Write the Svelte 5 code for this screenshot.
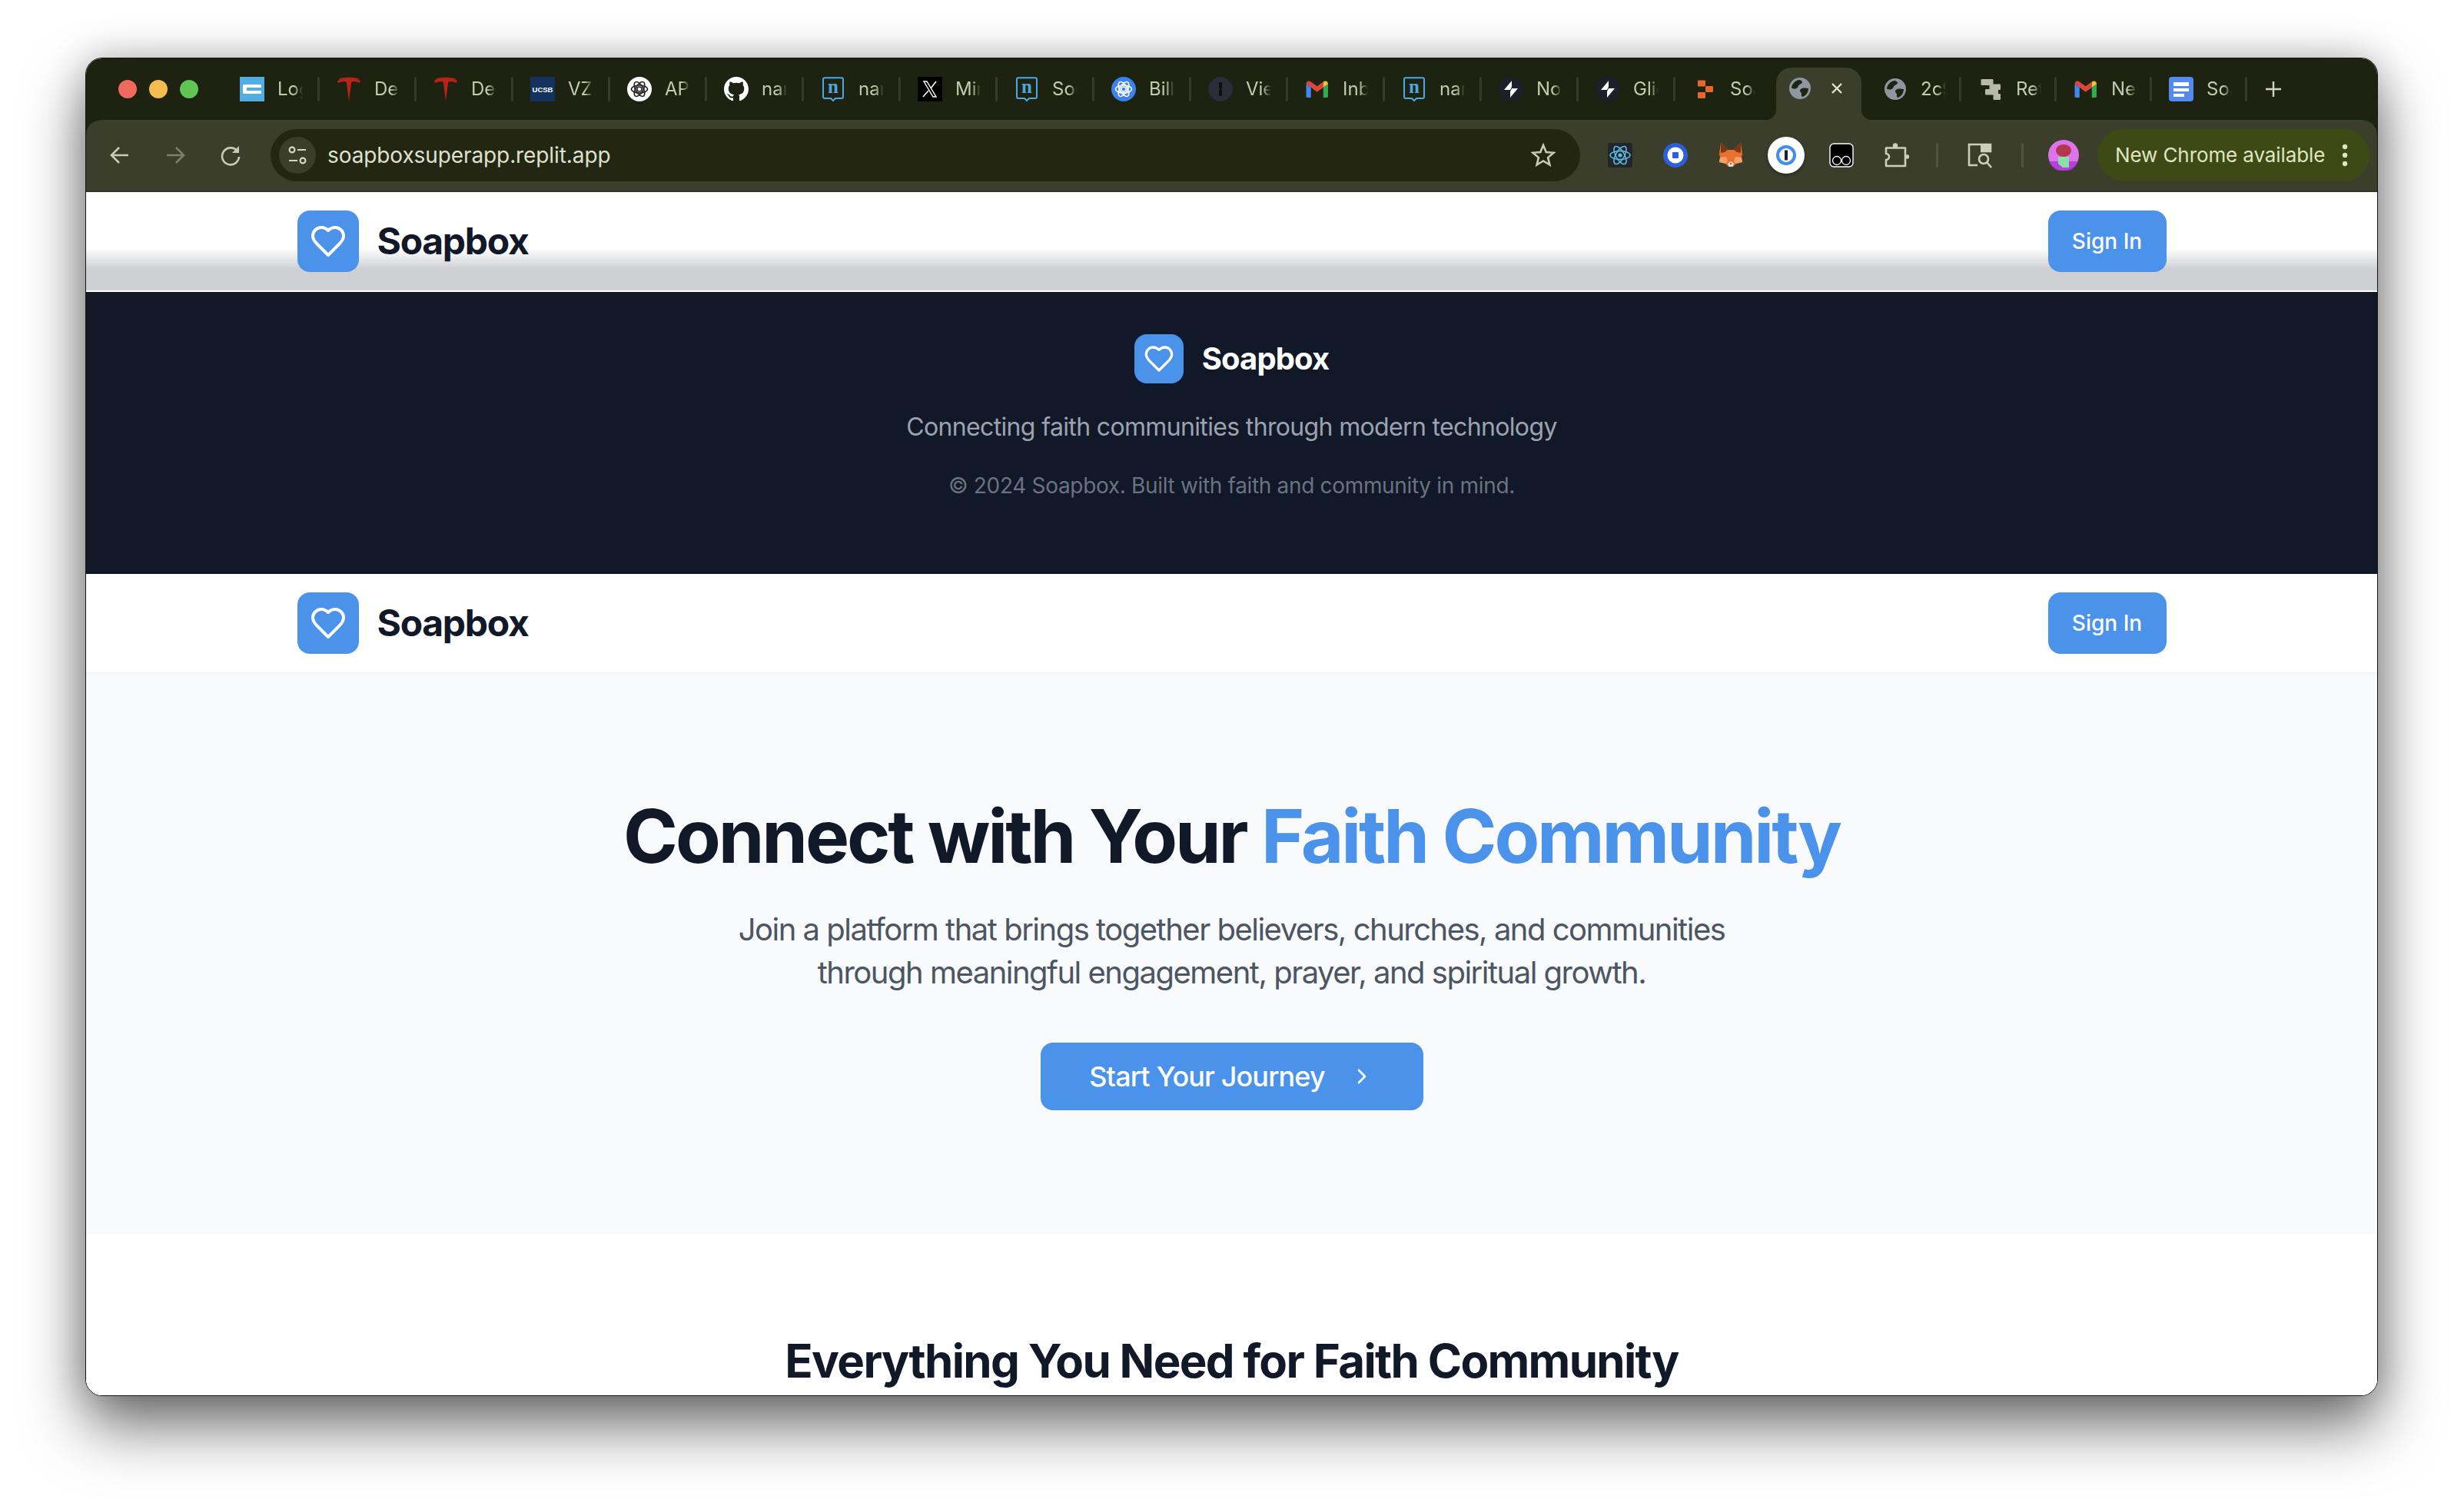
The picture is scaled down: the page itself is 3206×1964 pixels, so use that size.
<script>
  const tabs = [
    { icon: 'log', text: 'Log' }, { icon: 'tesla', text: 'Des' }, { icon: 'tesla', text: 'Des' },
    { icon: 'ucsb', text: 'VZ' }, { icon: 'openai', text: 'API' }, { icon: 'github', text: 'nar' },
    { icon: 'n', text: 'nar' }, { icon: 'x', text: 'Mir' }, { icon: 'n', text: 'Sou' },
    { icon: 'openaiBlue', text: 'Bill' }, { icon: 'key', text: 'Vie' }, { icon: 'gmail', text: 'Inb' },
    { icon: 'n', text: 'nar' }, { icon: 'bolt', text: 'No' }, { icon: 'bolt', text: 'Glic' },
    { icon: 'replit', text: 'Soa' }
  ];
  const laterTabs = [
    { icon: 'globe', text: '2c9' }, { icon: 'replitGrey', text: 'Ret' },
    { icon: 'gmail', text: 'Ne' }, { icon: 'docs', text: 'Soa' }
  ];
  const heart = 'M19 14c1.49-1.46 3-3.21 3-5.5A5.5 5.5 0 0 0 16.5 3c-1.76 0-3 .5-4.5 2-1.5-1.5-2.74-2-4.5-2A5.5 5.5 0 0 0 2 8.5c0 2.3 1.5 4.05 3 5.5l7 7Z';
</script>

{#snippet favicon(name)}
  <svg class="fav" viewBox="0 0 32 32">
    {#if name === 'log'}
      <rect width="32" height="32" fill="#53ade3" />
      <path d="M4 10h24v4H9v4h19v4H4z" fill="#fff" />
    {:else if name === 'tesla'}
      <path d="M1 5C9 1 23 1 31 5l-1 3c-2-1-5-2-8-2-2 0-3 1-3 2L16 32 13 8c0-1-1-2-3-2-3 0-6 1-8 2z" fill="#b8241b" />
      <path d="M3 2.5C11 0 21 0 29 2.5L28 4C21 2 11 2 4 4z" fill="#b8241b" />
    {:else if name === 'ucsb'}
      <rect width="32" height="32" fill="#13335e" />
      <text x="16" y="20" text-anchor="middle" class="ucsb">UCSB</text>
    {:else if name === 'openai' || name === 'openaiBlue'}
      <circle cx="16" cy="16" r="16" fill={name === 'openai' ? '#fff' : '#3a82ee'} />
      <g fill="none" stroke={name === 'openai' ? '#222' : '#fff'} stroke-width="1.6">
        <ellipse cx="16" cy="16" rx="10.5" ry="5" />
        <ellipse cx="16" cy="16" rx="10.5" ry="5" transform="rotate(60 16 16)" />
        <ellipse cx="16" cy="16" rx="10.5" ry="5" transform="rotate(120 16 16)" />
        <circle cx="16" cy="16" r="3" />
      </g>
    {:else if name === 'github'}
      <path transform="scale(2)" fill="#fff" fill-rule="evenodd" d="M8 0C3.58 0 0 3.58 0 8c0 3.54 2.29 6.53 5.47 7.59.4.07.55-.17.55-.38 0-.19-.01-.82-.01-1.49-2.01.37-2.53-.49-2.69-.94-.09-.23-.48-.94-.82-1.13-.28-.15-.68-.52-.01-.53.63-.01 1.08.58 1.23.82.72 1.21 1.87.87 2.33.66.07-.52.28-.87.51-1.07-1.78-.2-3.64-.89-3.64-3.95 0-.87.31-1.59.82-2.15-.08-.2-.36-1.02.08-2.12 0 0 .67-.21 2.2.82.64-.18 1.32-.27 2-.27.68 0 1.36.09 2 .27 1.53-1.04 2.2-.82 2.2-.82.44 1.1.16 1.92.08 2.12.51.56.82 1.27.82 2.15 0 3.07-1.87 3.75-3.65 3.95.29.25.54.73.54 1.48 0 1.07-.01 1.93-.01 2.2 0 .21.15.46.55.38A8.013 8.013 0 0016 8c0-4.42-3.58-8-8-8z" />
    {:else if name === 'n'}
      <path d="M5 1.2h22a2 2 0 0 1 2 2V26a2 2 0 0 1-2 2h-8l-3 3-3-3H5a2 2 0 0 1-2-2V3.200a2 2 0 0 1 2-2z" fill="none" stroke="#4aa9e2" stroke-width="2" />
      <text x="16" y="21" text-anchor="middle" class="nglyph">n</text>
    {:else if name === 'x'}
      <rect width="32" height="32" fill="#000" />
      <path d="M8 6h4l12 20h-4z" fill="none" stroke="#fff" stroke-width="1.4" />
      <path d="M24 6l-7 9M14 18l-7 8" stroke="#fff" stroke-width="1.6" />
    {:else if name === 'key'}
      <circle cx="16" cy="16" r="16" fill="#2b2e38" />
      <path d="M14 7h4v7l-1 2 1 2v7h-4v-7l1-2-1-2z" fill="#0d0f12" />
    {:else if name === 'gmail'}
      <g transform="translate(1.5 3.6) scale(.89 .73)">
        <path d="M0 8v22a2 2 0 0 0 2 2h5V14z" fill="#4285f4" />
        <path d="M32 8v22a2 2 0 0 1-2 2h-5V14z" fill="#34a853" />
        <path d="M0 8C0 3 4 1 7 4l9 8 9-8v10l-9 8-9-8-7-6z" fill="#d9483b" />
        <path d="M25 4c3-3 7-1 7 4l-7 6z" fill="#f6bd41" />
      </g>
    {:else if name === 'bolt'}
      <circle cx="16" cy="16" r="16" fill="#1d2029" />
      <path d="M17 5L7 17h8l2-4zM15 27l10-12h-8l-2 4z" fill="#fff" />
    {:else if name === 'replit'}
      <g fill="#e4682c">
        <rect x="7" y="4.500" width="10" height="8" rx="1" />
        <rect x="17" y="12" width="10" height="8" rx="1" />
        <rect x="7" y="20" width="10" height="8" rx="1" />
      </g>
    {:else if name === 'replitGrey'}
      <g fill="#b7b9aa">
        <rect x="3.500" y="3" width="16" height="8" rx="1" />
        <rect x="14.500" y="9.500" width="14.500" height="7.500" rx="1" />
        <rect x="9" y="16" width="17" height="7.500" rx="1" />
        <rect x="19.500" y="22" width="9.500" height="8" rx="1" />
      </g>
    {:else if name === 'docs'}
      <rect width="32" height="32" rx="4" fill="#5489ee" />
      <path d="M6 7h20v5H6zM6 15h20v4H6zM6 22h14v4H6z" fill="#fff" />
    {:else if name === 'globe'}
      <circle cx="16" cy="16" r="14" fill="#9096a0" />
      <path d="M5 15.500C5.500 10 10 5.500 15.500 5c2 .5 3.500 1.500 3.500 3 0 2-3 2-4.500 4S13 16 10 16.500c-2 .3-3.500-.3-5-1z" fill="#1f2413" />
      <path d="M27 16c0 5-3 9.500-7.500 11-1.500-.5-2-2-1.500-3.500.5-2-2-2.500-2-4.500s3-3.500 5.500-3.500c2 0 4 .5 5.500.5z" fill="#1f2413" />
    {/if}
  </svg>
{/snippet}

{#snippet logo(cls, size)}
  <span class="mark {cls}">
    <svg viewBox="0 0 24 24" width={size} height={size} fill="none" stroke="#fff" stroke-width="2" stroke-linecap="round" stroke-linejoin="round"><path d={heart} /></svg>
  </span>
{/snippet}

{#snippet topnav()}
  <div class="nav-inner">
    <div class="brand">
      {@render logo('mark-lg', 48)}
      <span class="brand-name">Soapbox</span>
    </div>
    <button class="signin">Sign In</button>
  </div>
{/snippet}

<div class="desktop">
  <main class="window">
    <header class="chrome">
      <div class="tabstrip">
        <div class="lights">
          <i class="red"></i><i class="yellow"></i><i class="green"></i>
        </div>
        {#each tabs as t}
          <div class="tab">
            {@render favicon(t.icon)}
            <span class="tab-text">{t.text}</span>
          </div>
        {/each}
        <div class="tab-active">
          {@render favicon('globe')}
          <svg class="close" viewBox="0 0 16 16"><path d="M2 2l12 12M14 2L2 14" stroke="#e2e4d2" stroke-width="2.4" /></svg>
        </div>
        {#each laterTabs as t}
          <div class="tab tab-later">
            {@render favicon(t.icon)}
            <span class="tab-text">{t.text}</span>
          </div>
        {/each}
        <svg class="plus" viewBox="0 0 22 22"><path d="M11 1v20M1 11h20" stroke="#d3d6bd" stroke-width="2.4" /></svg>
      </div>

      <div class="toolbar">
        <div class="navs">
          <svg viewBox="0 0 28 28" class="tool"><path d="M25 14H4M13 4L3 14l10 10" fill="none" stroke="#c9ccb2" stroke-width="2.6" /></svg>
          <svg viewBox="0 0 28 28" class="tool"><path d="M3 14h21M15 4l10 10-10 10" fill="none" stroke="#7d8068" stroke-width="2.6" /></svg>
          <svg viewBox="0 0 28 28" class="tool"><path d="M23 9a11 11 0 1 0 2 7" fill="none" stroke="#c9ccb2" stroke-width="2.6" /><path d="M25 2v9h-9z" fill="#c9ccb2" /></svg>
        </div>
        <div class="omnibox">
          <span class="chip">
            <svg viewBox="0 0 26 26" width="26" height="26" fill="none" stroke="#d5d8bf" stroke-width="2.2"><circle cx="6" cy="6" r="3.4" /><path d="M13 6h11M2 20h11" /><circle cx="20" cy="20" r="3.4" /></svg>
          </span>
          <span class="url">soapboxsuperapp.replit.app</span>
          <svg class="star" viewBox="0 0 32 32"><path d="M16 3l3.8 9 9.7.8-7.4 6.3 2.300 9.500L16 23.500l-8.400 5.100 2.300-9.500-7.400-6.300 9.700-.8z" fill="none" stroke="#c9ccb2" stroke-width="2.6" /></svg>
        </div>
        <div class="exts">
          <svg class="ext" viewBox="0 0 32 32">
            <rect width="32" height="32" rx="2" fill="#22262a" />
            <g fill="none" stroke="#5cbde6" stroke-width="1.5">
              <ellipse cx="16" cy="16" rx="13" ry="5.500" />
              <ellipse cx="16" cy="16" rx="13" ry="5.500" transform="rotate(60 16 16)" />
              <ellipse cx="16" cy="16" rx="13" ry="5.500" transform="rotate(120 16 16)" />
            </g>
            <circle cx="16" cy="16" r="2.600" fill="#5cbde6" />
          </svg>
          <svg class="ext" viewBox="0 0 32 32">
            <circle cx="16" cy="16" r="16" fill="#2c5fdc" />
            <circle cx="16" cy="16" r="10.500" fill="#fff" />
            <rect x="12" y="12" width="8" height="8" rx="1" fill="#2c5fdc" />
          </svg>
          <svg class="ext" viewBox="0 0 32 32">
            <path d="M3 0L12 9H20L29 0L31 14L30 19L31 25L23 27L19 31H13L9 27L1 25L2 19L1 14Z" fill="#e8712f" />
            <path d="M3 0L12 9L8 12L3 13ZM29 0L20 9L24 12L29 13Z" fill="#7d3610" />
            <path d="M2 19L10 18L12 24L9 27L1 25ZM30 19L22 18L20 24L23 27L31 25Z" fill="#f2a06a" />
            <path d="M12 27L16 24L20 27L18 31H14Z" fill="#e8e4df" />
            <path d="M14.500 26.500h3L16 28.500z" fill="#2c2018" />
          </svg>
          <span class="ext-on">
            <svg viewBox="0 0 32 32" width="32" height="32">
              <circle cx="16" cy="16" r="11" fill="none" stroke="#3f8ff0" stroke-width="4" />
              <rect x="14" y="9.500" width="4" height="13" fill="#1c2230" />
            </svg>
          </span>
          <svg class="ext" viewBox="0 0 32 32">
            <rect x="1" y="1" width="30" height="30" rx="5" fill="#000" stroke="#fff" stroke-width="1.4" />
            <circle cx="10" cy="23" r="5.500" fill="none" stroke="#fff" stroke-width="1.3" />
            <circle cx="22" cy="23" r="5.500" fill="none" stroke="#fff" stroke-width="1.3" />
          </svg>
          <svg class="ext" viewBox="0 0 32 32">
            <path d="M2 6.500H27V30H2V22a4 4 0 0 0 0-8z" fill="none" stroke="#ccd0b6" stroke-width="2.6" stroke-linejoin="round" />
            <circle cx="14" cy="3.500" r="3.200" fill="#ccd0b6" />
            <circle cx="29.500" cy="18" r="2.800" fill="#ccd0b6" />
          </svg>
        </div>
        <span class="vsep first"></span>
        <svg class="ext search" viewBox="0 0 34 34">
          <path d="M14 30H3V3h28v9H18" fill="none" stroke="#ccd0b6" stroke-width="2.6" />
          <path d="M18 3h13v9H18z" fill="#ccd0b6" />
          <circle cx="22" cy="22" r="6" fill="none" stroke="#ccd0b6" stroke-width="2.6" />
          <path d="M26 26l6 7" stroke="#ccd0b6" stroke-width="2.6" />
        </svg>
        <span class="vsep"></span>
        <svg class="avatar" viewBox="0 0 40 40">
          <circle cx="20" cy="20" r="20" fill="#dd74ec" />
          <path d="M1 28h38a20 20 0 0 1-38 0z" fill="#a52bd8" opacity=".7" />
          <ellipse cx="20" cy="14" rx="10" ry="8" fill="#b2384f" />
          <path d="M13 22h14v14H19l-6-5z" fill="#8be0a8" />
        </svg>
        <div class="update">
          <span>New Chrome available</span>
          <svg viewBox="0 0 8 30" width="8" height="30"><circle cx="4" cy="4" r="3.200" fill="#dfe5c0" /><circle cx="4" cy="15" r="3.200" fill="#dfe5c0" /><circle cx="4" cy="26" r="3.200" fill="#dfe5c0" /></svg>
        </div>
      </div>
    </header>

    <div class="page">
      <nav class="nav ghost">{@render topnav()}</nav>

      <footer class="footer">
        <div class="footer-brand">
          {@render logo('mark-sm', 40)}
          <span class="footer-name">Soapbox</span>
        </div>
        <p class="tagline">Connecting faith communities through modern technology</p>
        <p class="copy">© 2024 Soapbox. Built with faith and community in mind.</p>
      </footer>

      <nav class="nav solid">{@render topnav()}</nav>

      <section class="hero">
        <h1>Connect with Your <span>Faith Community</span></h1>
        <p class="lead">Join a platform that brings together believers, churches, and communities<br />through meaningful engagement, prayer, and spiritual growth.</p>
        <button class="cta">
          Start Your Journey
          <svg viewBox="0 0 24 24" width="32" height="32" fill="none" stroke="#fff" stroke-width="2" stroke-linecap="round" stroke-linejoin="round"><path d="m9 18 6-6-6-6" /></svg>
        </button>
      </section>

      <section class="features">
        <h2>Everything You Need for Faith Community</h2>
      </section>
    </div>
  </main>
</div>

<style>
  :global(body) { margin: 0; background: #fff; }
  .desktop { width: 3206px; height: 1964px; overflow: hidden; padding: 75px 0 0 111px; box-sizing: border-box; font-family: Inter, "Liberation Sans", sans-serif; }
  .window { width: 2983px; height: 1742px; box-sizing: border-box; border: 1.5px solid #151515; border-radius: 22px; overflow: hidden; display: flex; flex-direction: column; background: #fff; box-shadow: 0 40px 80px rgba(0,0,0,.55), 0 0 50px rgba(0,0,0,.22); }

  .chrome { flex: none; background: #1d2211; height: 173.5px; display: flex; flex-direction: column; }
  .tabstrip { flex: none; height: 79.5px; display: flex; align-items: center; box-sizing: border-box; }
  .lights { width: 178px; padding-left: 42px; box-sizing: border-box; display: flex; gap: 16px; flex: none; }
  .lights i { width: 24px; height: 24px; border-radius: 50%; display: block; }
  .red { background: #f0695f; }
  .yellow { background: #f5bd4f; }
  .green { background: #5fc454; }

  .tab { width: 126px; height: 32px; flex: none; box-sizing: border-box; padding-left: 22px; display: flex; align-items: center; gap: 17px; position: relative; }
  .tab::after { content: ""; position: absolute; right: 0; top: 0; width: 3px; height: 32px; border-radius: 2px; background: #363b27; }
  .tab:nth-child(17)::after { display: none; }
  .tab-later { width: 124px; }
  .fav { width: 32px; height: 32px; flex: none; }
  .tab-text { width: 33px; overflow: hidden; white-space: nowrap; font-size: 24px; color: #c5c9ae; -webkit-mask-image: linear-gradient(90deg, #000 65%, transparent 100%); mask-image: linear-gradient(90deg, #000 65%, transparent 100%); }
  .ucsb { font: 700 9.5px "Liberation Sans", sans-serif; fill: #fff; }
  .nglyph { font: 700 25px "Liberation Serif", serif; fill: #4aa9e2; }

  .tab-active { width: 111px; height: 68px; margin: 11px 6px 0 5px; box-sizing: border-box; flex: none; background: #3a3e2b; border-radius: 20px 20px 0 0; padding: 0 0 14px 15px; display: flex; align-items: center; gap: 24px; position: relative; align-self: flex-end; }
  .tab-active::before, .tab-active::after { content: ""; position: absolute; bottom: 0; width: 14px; height: 14px; }
  .tab-active::before { left: -14px; background: radial-gradient(circle at 0 0, transparent 14px, #3a3e2b 14.5px); }
  .tab-active::after { right: -14px; background: radial-gradient(circle at 100% 0, transparent 14px, #3a3e2b 14.5px); }
  .close { width: 16px; height: 16px; flex: none; }
  .plus { width: 22px; height: 22px; margin-left: 23px; }

  .toolbar { flex: 1; background: #3a3e2b; border-radius: 20px 20px 0 0; display: flex; align-items: center; position: relative; box-sizing: border-box; border-bottom: 2px solid #30342b; }
  .navs { width: 240px; padding-left: 30px; box-sizing: border-box; display: flex; gap: 44px; flex: none; }
  .tool { width: 28px; height: 28px; flex: none; }
  .omnibox { width: 1704px; height: 68px; border-radius: 34px; background: #222612; display: flex; align-items: center; flex: none; padding-left: 11px; box-sizing: border-box; }
  .chip { width: 48px; height: 48px; border-radius: 50%; background: #3a3e2b; display: flex; align-items: center; justify-content: center; flex: none; }
  .url { font-size: 28px; letter-spacing: -.1px; color: #dfe1cc; margin-left: 15px; flex: 1; }
  .star { width: 32px; height: 32px; margin-right: 32px; flex: none; }
  .exts { display: flex; align-items: center; margin-left: 36px; gap: 40px; flex: none; }
  .ext { width: 32px; height: 32px; flex: none; }
  .ext-on { width: 48px; height: 48px; margin: 0 -8px; border-radius: 50%; background: #fff; display: flex; align-items: center; justify-content: center; box-shadow: 0 2px 4px rgba(0,0,0,.35); }
  .vsep { width: 3px; height: 32px; background: #50553f; border-radius: 2px; flex: none; margin-left: 37px; }
  .vsep.first { margin-left: 35px; }
  .search { width: 34px; height: 34px; margin-left: 37px; }
  .avatar { width: 40px; height: 40px; margin-left: 32px; flex: none; }
  .update { width: 354px; height: 68px; margin-left: 24px; border-radius: 34px; background: #3e4a16; box-sizing: border-box; padding-left: 23px; display: flex; align-items: center; gap: 22px; color: #dfe5c0; font-size: 26px; letter-spacing: -.1px; white-space: nowrap; flex: none; }

  .page { flex: 1; min-height: 0; overflow: hidden; background: #fff; display: flex; flex-direction: column; }
  .nav { flex: none; box-sizing: border-box; height: 130px; padding: 24px 0; }
  .ghost { background: linear-gradient(#fff 73px, #cfd0d4 100px, #cfd0d4 128px, #fff 128px); }
  .solid { background: #fff; border-bottom: 2px solid #f3f4f6; }
  .nav-inner { width: 2432px; margin: 0 auto; display: flex; align-items: center; justify-content: space-between; }
  .brand { display: flex; align-items: center; gap: 24px; }
  .mark { display: flex; align-items: center; justify-content: center; background: #4a92ea; flex: none; }
  .mark-lg { width: 80px; height: 80px; border-radius: 16px; }
  .mark-sm { width: 64px; height: 64px; border-radius: 16px; }
  .brand-name { font-size: 48px; font-weight: 700; color: #111827; letter-spacing: -1.3px; }
  .signin { width: 154px; height: 80px; border: 0; border-radius: 16px; background: #4a92ea; color: #fff; font: 500 28px Inter, sans-serif; }

  .footer { flex: none; height: 367px; box-sizing: border-box; padding-top: 55px; background: #111827; text-align: center; }
  .footer-brand { display: flex; align-items: center; justify-content: center; gap: 24px; }
  .footer-name { font-size: 40px; font-weight: 700; color: #fff; letter-spacing: -.9px; }
  .tagline { margin: 33px 0 0; font-size: 32px; line-height: 48px; letter-spacing: -.65px; color: #9ca3af; }
  .copy { margin: 32px 0 0; font-size: 28px; line-height: 40px; letter-spacing: -.33px; color: #6b7280; }

  .hero { flex: none; height: 729px; box-sizing: border-box; padding-top: 160px; background: #f9fafb; text-align: center; display: flex; flex-direction: column; align-items: center; }
  h1 { margin: 0 0 43px; font-size: 96px; line-height: 102px; font-weight: 700; letter-spacing: -3.15px; color: #111827; white-space: nowrap; }
  h1 span { color: #4a92ea; }
  .lead { margin: 0 0 63px; font-size: 40px; line-height: 56px; letter-spacing: -1.5px; color: #4b5563; }
  .cta { width: 498px; height: 88px; border: 0; border-radius: 16px; background: #4a92ea; color: #fff; font: 500 36px Inter, sans-serif; letter-spacing: -.9px; display: flex; align-items: center; justify-content: center; gap: 32px; padding: 0; }

  .features { flex: 1; padding-top: 125px; text-align: center; background: #fff; }
  h2 { margin: 0; font-size: 60px; line-height: 80px; font-weight: 700; letter-spacing: -1.68px; color: #111827; white-space: nowrap; }
</style>
